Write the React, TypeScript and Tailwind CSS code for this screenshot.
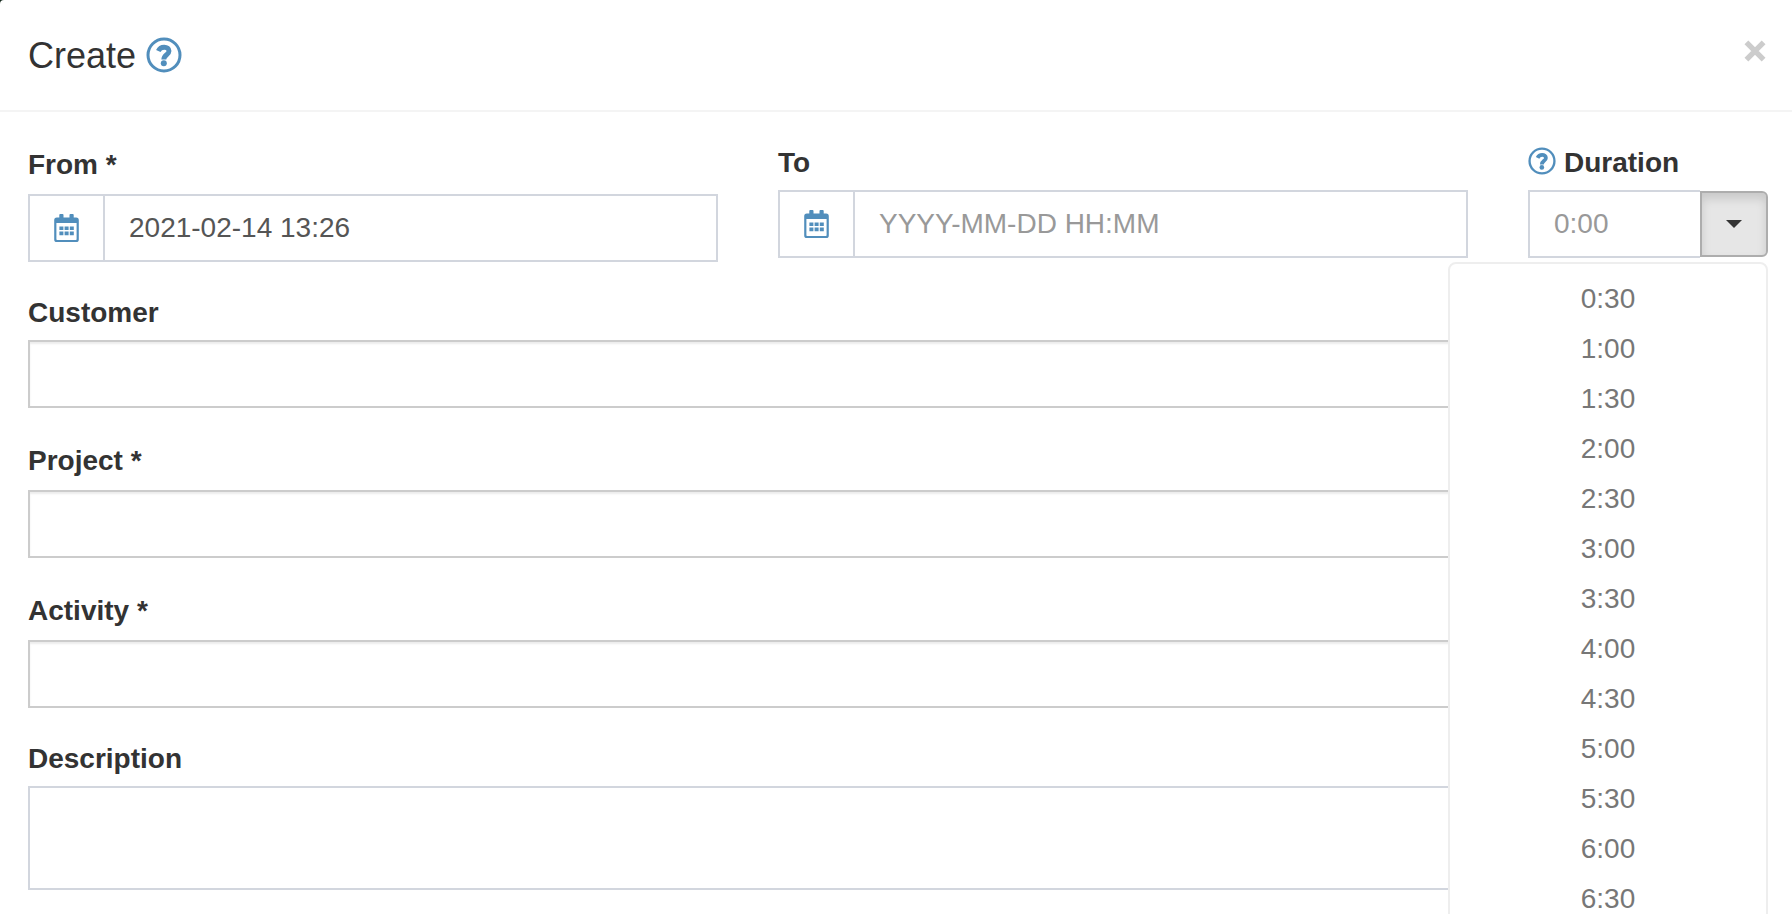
import React, { useState } from 'react';

const DURATIONS = [
    '0:30', '1:00', '1:30', '2:00', '2:30', '3:00', '3:30',
    '4:00', '4:30', '5:00', '5:30', '6:00', '6:30',
];

const HelpIcon: React.FC<{ size: number }> = ({ size }) => (
    <svg width={size} height={size} viewBox="0 0 36 36" fill="none" stroke="currentColor">
        <circle cx="18" cy="18" r="16" strokeWidth="3" />
        <path
            d="M12.3 14C13.6 11.2 15.7 10.2 18.2 10.2C21 10.2 23 11.8 23 14C23 18 17.8 17.6 17.8 22.6"
            strokeWidth="4.9"
        />
        <circle cx="17.8" cy="26.3" r="3" fill="currentColor" stroke="none" />
    </svg>
);

const CalendarIcon: React.FC = () => (
    <svg width="25" height="28" viewBox="0 0 25 28" fill="currentColor">
        <path d="M6.2 0h2.4a.9.9 0 0 1 .9.9V5H5.3V.9A.9.9 0 0 1 6.2 0zM16.4 0h2.4a.9.9 0 0 1 .9.9V5h-4.2V.9a.9.9 0 0 1 .9-.9z" />
        <path
            fillRule="evenodd"
            d="M2.8 3.6h19.4A2.6 2.6 0 0 1 24.8 6.2v19.2A2.6 2.6 0 0 1 22.2 28H2.8A2.6 2.6 0 0 1 .2 25.4V6.2A2.6 2.6 0 0 1 2.8 3.6zM2.4 9v16.2q0 .7.7.7h18.8q.7 0 .7-.7V9z"
        />
        <path d="M5.4 12.4h4v3.6h-4zM10.6 12.4h4v3.6h-4zM15.8 12.4h4v3.6h-4zM5.4 17.6h4v3.6h-4zM10.6 17.6h4v3.6h-4zM15.8 17.6h4v3.6h-4z" />
    </svg>
);

interface FieldLabelProps {
    htmlFor: string;
    required?: boolean;
    children: React.ReactNode;
}

const FieldLabel: React.FC<FieldLabelProps> = ({ htmlFor, required, children }) => (
    <label
        htmlFor={htmlFor}
        className={`mb-[6px] block font-bold text-[#333] ${required ? 'leading-[46px]' : 'leading-[42px]'}`}
    >
        {children}
        {required && ' *'}
    </label>
);

interface DateFieldProps {
    id: string;
    label: string;
    value: string;
    required?: boolean;
    onChange: (value: string) => void;
}

const DateField: React.FC<DateFieldProps> = ({ id, label, value, required, onChange }) => (
    <div className="col-span-5">
        <FieldLabel htmlFor={id} required={required}>{label}</FieldLabel>
        <div className="flex h-[68px] border-2 border-[#d2d6de]">
            <button
                type="button"
                aria-label={`Pick ${label}`}
                className="flex w-[75px] shrink-0 items-center justify-center border-r-2 border-[#d2d6de] text-[#518ebc]"
            >
                <CalendarIcon />
            </button>
            <input
                id={id}
                type="text"
                value={value}
                onChange={(e) => onChange(e.target.value)}
                placeholder="YYYY-MM-DD HH:MM"
                className="min-w-0 flex-1 px-6 text-[#555] placeholder-[#999] outline-none"
            />
        </div>
    </div>
);

interface SelectFieldProps {
    id: string;
    label: string;
    required?: boolean;
}

const SelectField: React.FC<SelectFieldProps> = ({ id, label, required }) => (
    <div>
        <FieldLabel htmlFor={id} required={required}>{label}</FieldLabel>
        <select
            id={id}
            className="block h-[68px] w-full appearance-none border-2 border-[#ccc] bg-white px-6 text-[#555] shadow-[inset_0_2px_2px_rgba(0,0,0,0.075)] outline-none"
        >
            <option value=""></option>
        </select>
    </div>
);

export default function App() {
    const [from, setFrom] = useState('2021-02-14 13:26');
    const [to, setTo] = useState('');
    const [duration, setDuration] = useState('');
    const [description, setDescription] = useState('');
    const [menuOpen, setMenuOpen] = useState(true);

    const pickDuration = (value: string) => {
        setDuration(value);
        setMenuOpen(false);
    };

    return (
        <div className="h-screen overflow-hidden bg-[#12261a] font-['Liberation_Sans',Arial,sans-serif] text-[28px] text-[#333]">
            <div className="h-full rounded-tl-[4px] bg-white">
                <header className="flex h-28 items-center justify-between border-b-2 border-[#f4f4f4] pr-6 pl-7">
                    <h4 className="flex items-center gap-[10px] text-4xl">
                        <span className="pt-[2px]">Create</span>
                        <a href="#help" aria-label="Help" className="text-[#518ebc]">
                            <HelpIcon size={36} />
                        </a>
                    </h4>
                    <button type="button" aria-label="Close" className="mb-2 p-[2px] text-[#ccc]">
                        <svg width="22" height="22" viewBox="0 0 22 22" stroke="currentColor" strokeWidth="5.4">
                            <path d="M2.4 2.4L19.6 19.6M19.6 2.4L2.4 19.6" />
                        </svg>
                    </button>
                </header>

                <form className="flex flex-col gap-[30px] pt-[30px] pr-6 pl-7">
                    <div className="grid grid-cols-12 gap-x-[60px]">
                        <DateField id="from" label="From" value={from} onChange={setFrom} required />
                        <DateField id="to" label="To" value={to} onChange={setTo} />

                        <div className="col-span-2">
                            <div className="flex items-start gap-2">
                                <a href="#duration-help" aria-label="Duration help" className="mt-[5px] text-[#518ebc]">
                                    <HelpIcon size={28} />
                                </a>
                                <FieldLabel htmlFor="duration">Duration</FieldLabel>
                            </div>
                            <div className="relative flex h-[68px] items-center">
                                <input
                                    id="duration"
                                    type="text"
                                    value={duration}
                                    onChange={(e) => setDuration(e.target.value)}
                                    placeholder="0:00"
                                    className="h-full min-w-0 flex-1 border-2 border-r-0 border-[#d2d6de] px-6 text-[#555] placeholder-[#999] outline-none"
                                />
                                <button
                                    type="button"
                                    aria-label="Choose duration"
                                    aria-expanded={menuOpen}
                                    onClick={() => setMenuOpen(!menuOpen)}
                                    className="flex h-[66px] w-[68px] shrink-0 items-center justify-center rounded-r-md border-2 border-[#adadad] bg-[#e6e6e6] text-[#333] shadow-[inset_0_6px_10px_rgba(0,0,0,0.125)]"
                                >
                                    <svg width="16" height="8" viewBox="0 0 16 8" fill="currentColor">
                                        <path d="M0 0h16L8 8z" />
                                    </svg>
                                </button>
                                {menuOpen && (
                                    <ul className="absolute top-full right-0 z-10 mt-1 w-80 rounded-lg border-2 border-[#eee] bg-white py-[10px]">
                                        {DURATIONS.map((item) => (
                                            <li key={item}>
                                                <button
                                                    type="button"
                                                    onClick={() => pickDuration(item)}
                                                    className="block w-full text-center leading-[50px] text-[#777]"
                                                >
                                                    {item}
                                                </button>
                                            </li>
                                        ))}
                                    </ul>
                                )}
                            </div>
                        </div>
                    </div>

                    <SelectField id="customer" label="Customer" />
                    <SelectField id="project" label="Project" required />
                    <SelectField id="activity" label="Activity" required />

                    <div>
                        <FieldLabel htmlFor="description">Description</FieldLabel>
                        <textarea
                            id="description"
                            value={description}
                            onChange={(e) => setDescription(e.target.value)}
                            className="block h-[104px] w-full resize-none border-2 border-[#d2d6de] px-6 py-3 text-[#555] outline-none"
                        />
                    </div>
                </form>
            </div>
        </div>
    );
}
